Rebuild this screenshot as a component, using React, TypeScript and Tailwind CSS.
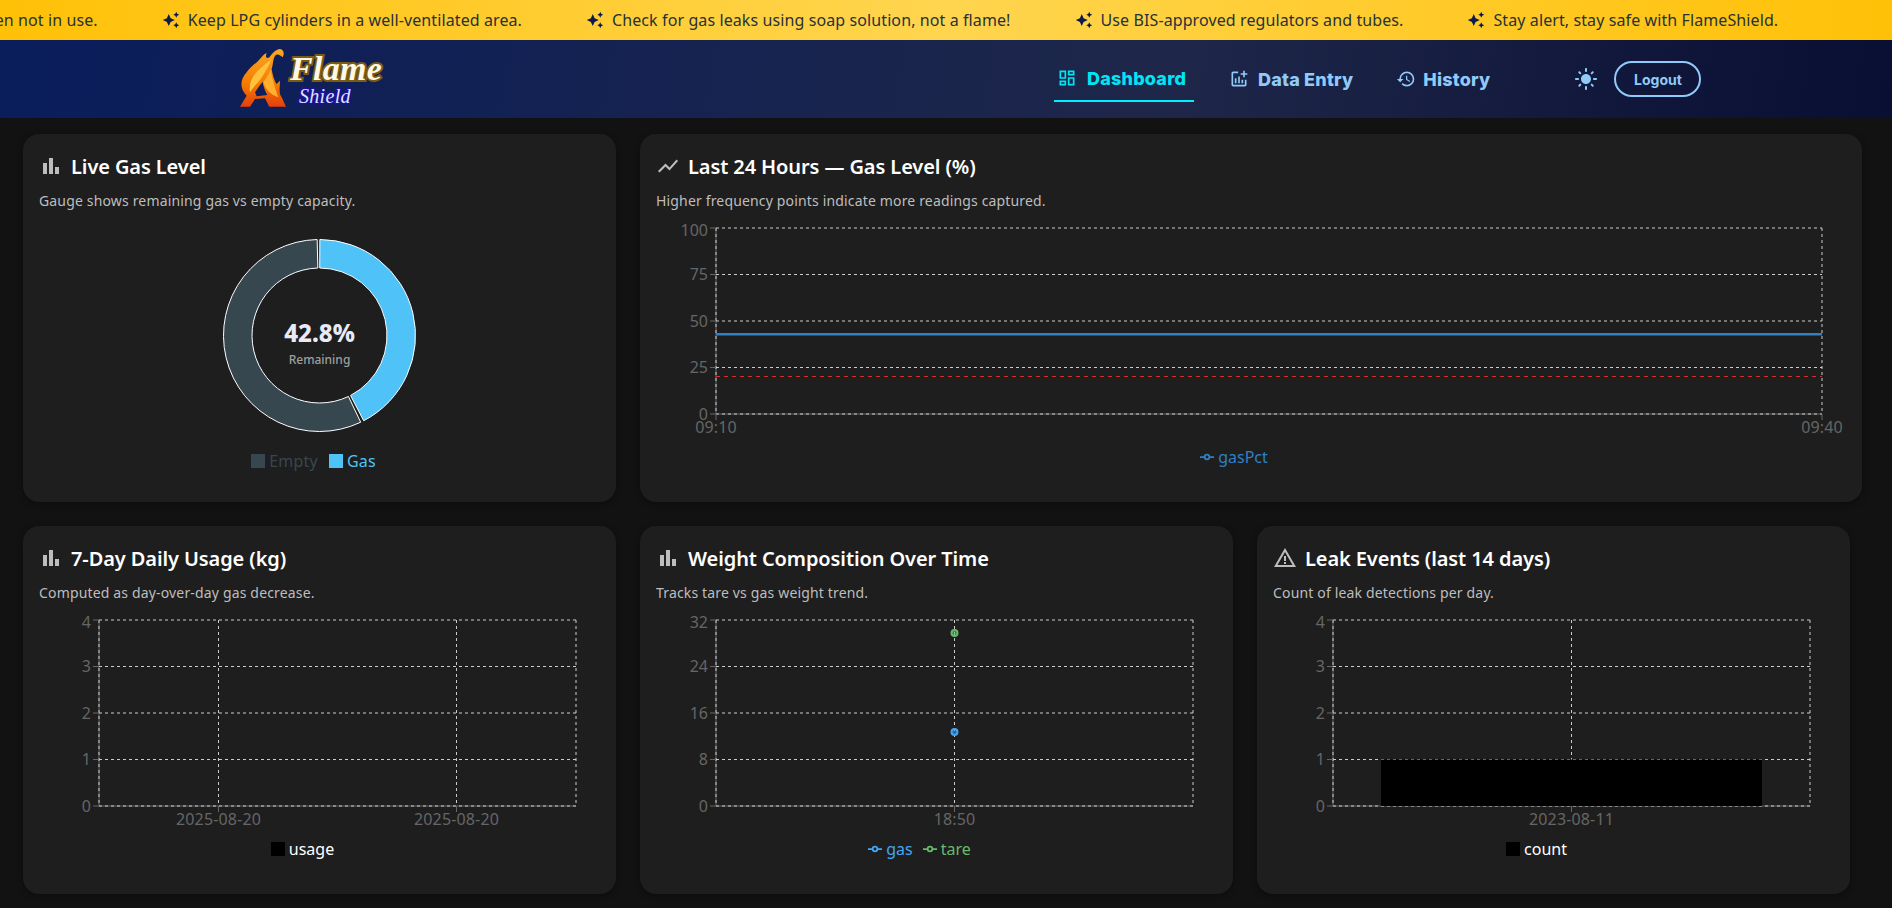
import { MdAddchart, MdAutoAwesome, MdBarChart, MdHistory, MdLightMode, MdOutlineDashboard, MdShowChart, MdWarningAmber } from "react-icons/md";
import type { ReactNode } from "react";

const tips = [
  "Turn off the regulator when not in use.",
  "Keep LPG cylinders in a well-ventilated area.",
  "Check for gas leaks using soap solution, not a flame!",
  "Use BIS-approved regulators and tubes.",
  "Stay alert, stay safe with FlameShield.",
];

const LEFT = 60;
const RIGHT = 537;
const TOP = 14;
const BOTTOM = 200;
const ROWS = [14, 60.5, 107, 153.5, 200];
const TICK = "#666";
const font = "'Noto Sans', sans-serif";

function Logo() {
  return (
    <div className="relative h-[80px] w-[160px] shrink-0">
      <svg width="160" height="80" viewBox="0 0 480 240" className="block">
        <defs>
          <linearGradient id="flame" x1="0" y1="0" x2="0" y2="1">
            <stop offset="0" stopColor="#f9a825" />
            <stop offset="0.6" stopColor="#f57c00" />
            <stop offset="1" stopColor="#e53f0c" />
          </linearGradient>
        </defs>
        <path
          fill="url(#flame)"
          d="M30 203 L50 170 C30 150 28 125 50 100 C60 85 75 75 85 65 C95 55 100 45 110 42 C105 55 110 60 118 55 C125 48 130 35 148 30 C160 30 165 42 158 55 C150 50 145 42 135 50 C128 62 130 75 125 90 C128 110 135 130 140 135 L150 125 C150 145 145 160 155 175 L168 203 L118 203 L105 178 L75 180 L60 203 Z"
        />
        <path fill="#ffc23d" d="M60 160 C55 130 70 105 95 85 C105 75 115 70 125 58 C118 80 105 100 92 120 C80 135 70 145 60 160 Z" />
        <path fill="#ffb02e" d="M100 130 C110 115 118 105 122 92 C125 115 135 145 145 175 C130 170 110 160 100 130 Z" />
        <path fill="#0f1f5c" d="M75 160 C85 145 92 135 98 128 C100 145 108 160 112 168 L80 172 Z" />
      </svg>
      <span className="absolute left-[60px] top-[13px] font-['Liberation_Serif'] text-[34px] font-bold italic leading-none tracking-[0.3px] text-[#fff8e7] [-webkit-text-stroke:4px_#7a5c14] [paint-order:stroke]">
        Flame
      </span>
      <span className="absolute left-[69px] top-[47px] font-['Liberation_Serif'] text-[20px] italic leading-none tracking-[0.3px] text-[#dfe3ff] [-webkit-text-stroke:3px_#1a1199] [paint-order:stroke]">
        Shield
      </span>
    </div>
  );
}

function TipBar() {
  return (
    <div className="flex h-10 items-center overflow-hidden whitespace-nowrap bg-[linear-gradient(90deg,#ffc107,#ffd54f_50%,#ffc107)] pl-[64px] font-['Noto_Sans',sans-serif] text-[16px] tracking-[0.1px] text-[#263238]">
      <div className="ml-[-287px] flex shrink-0 gap-[64px]">
        {tips.map((tip) => (
          <span key={tip} className="flex items-center gap-2">
            <MdAutoAwesome className="text-[18px] text-[#0d1b4c]" />
            {tip}
          </span>
        ))}
      </div>
    </div>
  );
}

function NavBar() {
  return (
    <header className="flex h-[78px] items-center bg-[linear-gradient(100deg,#0a1d5c,#1e2749_62%,#090e33)] pl-[230px] font-['Inter',sans-serif]">
      <Logo />
      <nav className="ml-[664px] flex h-full items-center">
        <a className="flex h-[46px] w-[140px] items-center gap-[10px] whitespace-nowrap border-b-2 border-[#00f0ff] pl-[3px] text-[18px] font-extrabold tracking-[0.2px] text-[#00e5f5]">
          <MdOutlineDashboard className="text-[20px]" />
          Dashboard
        </a>
        <a className="ml-[35px] flex items-center gap-[9px] text-[18px] font-extrabold tracking-[0.2px] text-[#90caf9]">
          <MdAddchart className="text-[20px]" />
          Data Entry
        </a>
        <a className="ml-[43px] flex items-center gap-[7px] text-[18px] font-extrabold tracking-[0.2px] text-[#90caf9]">
          <MdHistory className="text-[20px]" />
          History
        </a>
        <MdLightMode className="ml-[84px] text-[24px] text-[#90caf9]" />
        <button className="ml-[16px] h-9 w-[87px] rounded-[20px] border-2 border-[#90caf9] text-[14px] font-bold text-[#90caf9]">Logout</button>
      </nav>
    </header>
  );
}

function Card({ icon, title, sub, className, children }: { icon: ReactNode; title: string; sub: string; className: string; children: ReactNode }) {
  return (
    <section className={`rounded-2xl bg-[#1e1e1e] p-4 shadow-[0_2px_6px_rgba(0,0,0,0.35)] ${className}`}>
      <div className="flex h-8 items-center gap-2 text-[20px] font-semibold tracking-[-0.1px] text-white">
        <span className="text-[24px] text-[#bdbdbd]">{icon}</span>
        <span className="pt-[2px]">{title}</span>
      </div>
      <p className="mt-2 h-5 pt-[1px] text-[14px] leading-5 tracking-[0.16px] text-[#bdbdbd]">{sub}</p>
      {children}
    </section>
  );
}

type Chart = { width?: number; yLabels: string[]; xLabels: { x: number; label: string }[]; columns: number[]; children?: ReactNode };

function Plot({ width = 561, yLabels, xLabels, columns, children }: Chart) {
  const right = width === 561 ? RIGHT : 1166;
  return (
    <svg width={width} height={228} className="mt-1 block" style={{ fontFamily: font }}>
      <line x1={LEFT} y1={TOP} x2={LEFT} y2={BOTTOM} stroke={TICK} />
      <line x1={LEFT} y1={BOTTOM} x2={right} y2={BOTTOM} stroke={TICK} />
      {ROWS.map((y) => (
        <line key={y} x1={LEFT} y1={y} x2={right} y2={y} stroke="#ccc" strokeDasharray="3 3" />
      ))}
      {columns.map((x) => (
        <line key={x} x1={x} y1={TOP} x2={x} y2={BOTTOM} stroke="#ccc" strokeDasharray="3 3" />
      ))}
      {ROWS.map((y, i) => (
        <g key={y}>
          <line x1={LEFT - 6} y1={y} x2={LEFT} y2={y} stroke={TICK} />
          <text x={LEFT - 8} y={y + (i === 0 ? 8 : 5.5)} textAnchor="end" fontSize="16" fill={TICK}>
            {yLabels[i]}
          </text>
        </g>
      ))}
      {children}
      {xLabels.map((t) => (
        <g key={t.label + t.x}>
          <line x1={t.x} y1={BOTTOM} x2={t.x} y2={BOTTOM + 6} stroke={TICK} />
          <text x={t.x} y={BOTTOM + 19} textAnchor="middle" fontSize="16" letterSpacing="0.15" fill={TICK}>
            {t.label}
          </text>
        </g>
      ))}
    </svg>
  );
}

function LineKey({ color, label }: { color: string; label: string }) {
  return (
    <span className="flex items-center gap-1" style={{ color }}>
      <svg width="14" height="14" viewBox="0 0 32 32" fill="none" stroke={color} strokeWidth="4">
        <path d="M0 16h10.67M21.33 16H32" />
        <circle cx="16" cy="16" r="5.33" />
      </svg>
      {label}
    </span>
  );
}

function BoxKey({ color, label, textColor }: { color: string; label: string; textColor: string }) {
  return (
    <span className="flex items-center gap-1" style={{ color: textColor }}>
      <span className="size-[14px]" style={{ background: color }} />
      {label}
    </span>
  );
}

function Key({ children, shift = "pr-[34px]" }: { children: ReactNode; shift?: string }) {
  return <div className={`mt-[3px] flex h-6 items-center justify-center gap-[10px] text-[16px] ${shift}`}>{children}</div>;
}

function arc(start: number, end: number) {
  const cx = 280.5;
  const cy = 121.5;
  const R = 96;
  const r = 67.5;
  const point = (a: number, rad: number) => {
    const t = ((a - 90) * Math.PI) / 180;
    return `${(cx + rad * Math.cos(t)).toFixed(2)} ${(cy + rad * Math.sin(t)).toFixed(2)}`;
  };
  const large = end - start > 180 ? 1 : 0;
  return `M${point(start, R)} A${R} ${R} 0 ${large} 1 ${point(end, R)} L${point(end, r)} A${r} ${r} 0 ${large} 0 ${point(start, r)} Z`;
}

function Gauge() {
  return (
    <svg width={561} height={233} className="mt-1 block" style={{ fontFamily: font }}>
      <path d={arc(0.2, 152.6)} fill="#4fc3f7" stroke="#fff" />
      <path d={arc(154.6, 358.6)} fill="#37474f" stroke="#fff" />
      <text x={280.5} y={128} textAnchor="middle" fontSize="24" fontWeight="800" fill="#e8eaf6">
        42.8%
      </text>
      <text x={280.5} y={150} textAnchor="middle" fontSize="12" fontWeight="500" fill="#9e9e9e">
        Remaining
      </text>
    </svg>
  );
}

export default function App() {
  const ticks = ["4", "3", "2", "1", "0"];
  return (
    <div className="min-h-[908px] bg-[#121212] font-['Noto_Sans',sans-serif]">
      <TipBar />
      <NavBar />
      <main className="flex flex-col gap-6 pl-[23px] pt-4">
        <div className="flex gap-6">
          <Card icon={<MdBarChart />} title="Live Gas Level" sub="Gauge shows remaining gas vs empty capacity." className="h-[368px] w-[593px]">
            <Gauge />
            <div className="-mt-px">
              <Key shift="pr-[12px]">
                <span className="flex gap-[11px] tracking-[0.2px]">
                  <BoxKey color="#37474f" label="Empty" textColor="#37474f" />
                  <BoxKey color="#4fc3f7" label="Gas" textColor="#4fc3f7" />
                </span>
              </Key>
            </div>
          </Card>
          <Card icon={<MdShowChart />} title="Last 24 Hours — Gas Level (%)" sub="Higher frequency points indicate more readings captured." className="h-[368px] w-[1222px]">
            <Plot
              width={1190}
              yLabels={["100", "75", "50", "25", "0"]}
              xLabels={[
                { x: 60, label: "09:10" },
                { x: 1166, label: "09:40" },
              ]}
              columns={[60, 1166]}
            >
              <line x1={60} y1={162.5} x2={1166} y2={162.5} stroke="#d32f2f" strokeDasharray="4 4" />
              <line x1={60} y1={120.3} x2={1166} y2={120.3} stroke="#2f80c4" strokeWidth="2.5" />
            </Plot>
            <Key>
              <LineKey color="#2f80c4" label="gasPct" />
            </Key>
          </Card>
        </div>
        <div className="flex gap-6">
          <Card icon={<MdBarChart />} title="7-Day Daily Usage (kg)" sub="Computed as day-over-day gas decrease." className="h-[368px] w-[593px]">
            <Plot
              yLabels={ticks}
              xLabels={[
                { x: 179.5, label: "2025-08-20" },
                { x: 417.5, label: "2025-08-20" },
              ]}
              columns={[60, 179.5, 417.5, 537]}
            />
            <Key>
              <BoxKey color="#000" label="usage" textColor="#fff" />
            </Key>
          </Card>
          <Card icon={<MdBarChart />} title="Weight Composition Over Time" sub="Tracks tare vs gas weight trend." className="h-[368px] w-[593px]">
            <Plot yLabels={["32", "24", "16", "8", "0"]} xLabels={[{ x: 298.5, label: "18:50" }]} columns={[60, 298.5, 537]}>
              <circle cx={298.5} cy={27} r={3} fill="#66bb6a" fillOpacity="0.55" stroke="#66bb6a" strokeWidth="2" />
              <circle cx={298.5} cy={126} r={3} fill="#42a5f5" fillOpacity="0.55" stroke="#42a5f5" strokeWidth="2" />
            </Plot>
            <Key>
              <LineKey color="#42a5f5" label="gas" />
              <LineKey color="#66bb6a" label="tare" />
            </Key>
          </Card>
          <Card icon={<MdWarningAmber />} title="Leak Events (last 14 days)" sub="Count of leak detections per day." className="h-[368px] w-[593px]">
            <Plot yLabels={ticks} xLabels={[{ x: 298.5, label: "2023-08-11" }]} columns={[60, 298.5, 537]}>
              <rect x={108} y={153.5} width={381} height={46.5} fill="#000" />
            </Plot>
            <Key>
              <BoxKey color="#000" label="count" textColor="#fff" />
            </Key>
          </Card>
        </div>
      </main>
    </div>
  );
}
